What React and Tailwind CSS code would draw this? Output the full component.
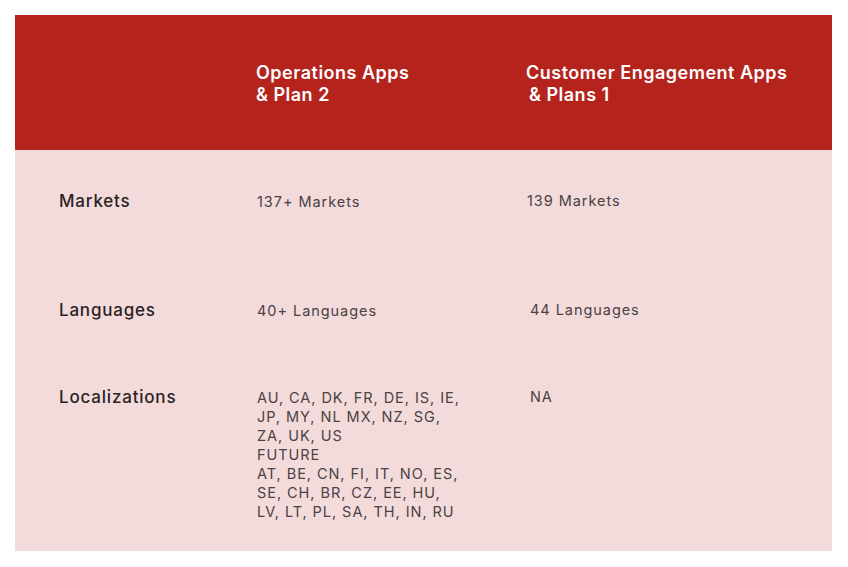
const rows = [
  { label: "Markets", a: ["137+ Markets"], b: ["139 Markets"], h: "h-[109px]" },
  { label: "Languages", a: ["40+ Languages"], b: ["44 Languages"], h: "h-[87px]", shift: true },
  {
    label: "Localizations",
    a: [
      "AU, CA, DK, FR, DE, IS, IE,",
      "JP, MY, NL MX, NZ, SG,",
      "ZA, UK, US",
      "FUTURE",
      "AT, BE, CN, FI, IT, NO, ES,",
      "SE, CH, BR, CZ, EE, HU,",
      "LV, LT, PL, SA, TH, IN, RU",
    ],
    b: ["NA"],
    h: "",
    shift: true,
  },
];

export default function App() {
  return (
    <div className="w-[848px] h-[567px] bg-white pt-[15px] pl-[15px] font-['Inter',sans-serif]">
      <div className="w-[817px]">
        <div className="bg-[#b5231d] h-[135px] pt-[47px] grid grid-cols-[241px_270px_1fr] text-white text-[18px] leading-[22px] tracking-[0.5px] font-semibold">
          <div />
          <div>
            <div>Operations Apps</div>
            <div>&amp; Plan 2</div>
          </div>
          <div>
            <div>Customer Engagement Apps</div>
            <div className="pl-[3px]">&amp; Plans 1</div>
          </div>
        </div>
        <div className="bg-[#f3dadb] pt-[41px] pb-[30px]">
          {rows.map((r) => (
            <div key={r.label} className={`grid grid-cols-[242px_270px_1fr] ${r.h}`}>
              <div className="pl-[44px] text-[17px] leading-[20px] tracking-[0.8px] font-medium text-[#2a2324]">
                {r.label}
              </div>
              <div className="text-[14.5px] leading-[19px] tracking-[0.95px] text-[#4a4243] pt-[0.5px]">
                {r.a.map((t) => (
                  <div key={t}>{t}</div>
                ))}
              </div>
              <div className={`text-[14.5px] leading-[19px] tracking-[0.95px] text-[#4a4243] ${r.shift ? "pl-[3px]" : ""}`}>
                {r.b.map((t) => (
                  <div key={t}>{t}</div>
                ))}
              </div>
            </div>
          ))}
        </div>
      </div>
    </div>
  );
}
